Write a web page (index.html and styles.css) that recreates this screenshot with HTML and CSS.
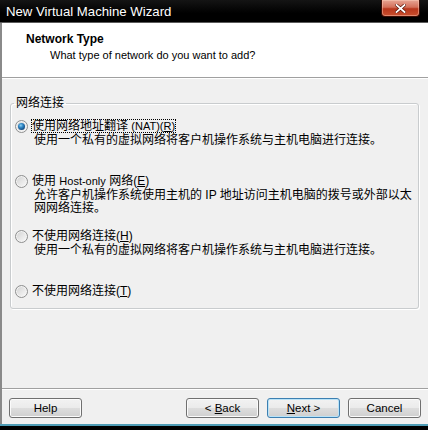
FILE: index.html
```html
<!DOCTYPE html>
<html>
<head>
<meta charset="utf-8">
<link rel="stylesheet" href="styles.css">
</head>
<body>
<div class="window">
  <div class="titlebar">
    <span class="title">New Virtual Machine Wizard</span>
    <span class="close">
      <svg width="11" height="9" viewBox="0 0 11 9"><path d="M1.5 1 L9.5 8 M9.5 1 L1.5 8" stroke="#5a1408" stroke-width="3.2" stroke-linecap="square"/><path d="M1.5 1 L9.5 8 M9.5 1 L1.5 8" stroke="#fff" stroke-width="1.8" stroke-linecap="square"/></svg>
    </span>
  </div>
  <div class="client">
    <div class="header">
      <div class="h-title">Network Type</div>
      <div class="h-sub">What type of network do you want to add?</div>
    </div>
    <div class="body">
      <fieldset class="group">
        <legend>网络连接</legend>
        <div class="options">
          <div class="option">
            <div class="choice"><span class="radio checked"></span><span class="label focus">使用网络地址翻译 <span class="latin">(NAT)(<u>R</u>)</span></span></div>
            <p class="desc">使用一个私有的虚拟网络将客户机操作系统与主机电脑进行连接。</p>
          </div>
          <div class="option">
            <div class="choice"><span class="radio"></span><span class="label">使用 <span class="latin">Host-only</span> 网络(<u>E</u>)</span></div>
            <p class="desc">允许客户机操作系统使用主机的 IP 地址访问主机电脑的拨号或外部以太<br>网网络连接。</p>
          </div>
          <div class="option">
            <div class="choice"><span class="radio"></span><span class="label">不使用网络连接(<u>H</u>)</span></div>
            <p class="desc">使用一个私有的虚拟网络将客户机操作系统与主机电脑进行连接。</p>
          </div>
          <div class="option">
            <div class="choice"><span class="radio"></span><span class="label">不使用网络连接(<u>T</u>)</span></div>
          </div>
        </div>
      </fieldset>
    </div>
    <div class="footer">
      <button class="btn">Help</button>
      <button class="btn back">&lt; <u>B</u>ack</button>
      <button class="btn default"><u>N</u>ext &gt;</button>
      <button class="btn">Cancel</button>
    </div>
  </div>
  <div class="frame-bottom"></div>
</div>
</body>
</html>
```
FILE: styles.css
```css
html, body {
  margin: 0;
  padding: 0;
  background: #000;
}

.window {
  width: 428px;
  height: 430px;
  display: flex;
  flex-direction: column;
  background: #000;
  overflow: hidden;
  font-family: "Liberation Sans", "Noto Sans CJK SC", sans-serif;
  color: #000;
}

.titlebar {
  height: 22px;
  flex: none;
  display: flex;
  align-items: flex-start;
  background: linear-gradient(#141414, #000 60%);
  border-bottom: 1px solid #5c5c5c;
}

.title {
  margin-top: 1px;
  padding-left: 6px;
  font-size: 13.2px;
  line-height: 22px;
  color: #fff;
  white-space: nowrap;
}

.close {
  margin-left: auto;
  margin-right: 8px;
  width: 39px;
  height: 17px;
  box-sizing: border-box;
  border: 1px solid #3b0c04;
  border-top: none;
  border-radius: 0 0 4px 4px;
  background: linear-gradient(#e7a594 0%, #d4705a 45%, #b8361c 55%, #c9502f 100%);
  box-shadow: inset 0 0 0 1px rgba(255, 210, 190, 0.45);
  display: flex;
  align-items: center;
  justify-content: center;
}

.client {
  flex: 1;
  display: flex;
  flex-direction: column;
  background: #f0f0f0;
  border-left: 2px solid #8a8a8a;
}

.header {
  height: 45px;
  flex: none;
  background: #fff;
  border-bottom: 1px solid #a0a0a0;
  padding: 9px 0 0 24px;
}

.h-title {
  font-size: 12px;
  font-weight: bold;
  line-height: 14px;
}

.h-sub {
  margin: 2px 0 0 24px;
  font-size: 11px;
  line-height: 14px;
}

.body {
  flex: 1;
  border-top: 1px solid #fff;
  padding: 17px 9px 0 8px;
}

.group {
  margin: 0;
  padding: 9px 4px 10px 4px;
  border: 1px solid #c9ccce;
  border-radius: 3px;
  box-shadow: 1px 1px 0 #fff, inset 1px 1px 0 #fff;
}

.group legend {
  padding: 0 2px;
  margin-left: -1px;
  font-size: 12px;
  line-height: 14px;
}

.options {
  display: grid;
  grid-template-rows: 55px 55px 55px auto;
}

.choice {
  display: flex;
  align-items: center;
  gap: 3px;
  height: 14px;
}

.radio {
  flex: none;
  width: 13px;
  height: 13px;
  box-sizing: border-box;
  border-radius: 50%;
  border: 1px solid #8e8f8f;
  background: linear-gradient(135deg, #cfd0d0 0%, #e6e6e6 50%, #fbfbfb 100%);
  box-shadow: inset 0 0 0 1px #f4f4f4;
  display: flex;
  align-items: center;
  justify-content: center;
}

.radio.checked::after {
  content: "";
  width: 7px;
  height: 7px;
  border-radius: 50%;
  background: radial-gradient(circle at 40% 35%, #8fd0f2 0%, #2f86c4 35%, #174f86 70%, #0f3558 100%);
}

.label {
  display: inline-block;
  font-size: 12px;
  line-height: 14px;
  padding: 0 1px;
  white-space: nowrap;
}

.latin {
  font-size: 11px;
}

.label.focus {
  outline: 1px dotted #000;
  outline-offset: -1px;
}

.desc {
  margin: 1px 0 0 19px;
  font-size: 12px;
  line-height: 13px;
  white-space: nowrap;
}

.footer {
  flex: none;
  height: 26px;
  border-top: 1px solid #a0a0a0;
  box-shadow: inset 0 1px 0 #fff;
  padding: 9px 7px 0 7px;
  display: flex;
  gap: 8px;
}

.btn {
  width: 73px;
  height: 20px;
  margin: 0;
  padding: 0;
  box-sizing: border-box;
  border: 1px solid #707070;
  border-radius: 3px;
  background: linear-gradient(#f2f2f2 0%, #ebebeb 48%, #dddddd 52%, #cfcfcf 100%);
  box-shadow: inset 0 0 0 1px #fbfbfb;
  font-family: "Liberation Sans", sans-serif;
  font-size: 11.5px;
  line-height: 18px;
  color: #000;
  text-align: center;
}

.btn.back {
  margin-left: auto;
}

.btn.default {
  border-color: #3c7fb1;
  box-shadow: inset 0 0 0 1px #b9e3f8;
}

.frame-bottom {
  flex: none;
  height: 6px;
  box-sizing: border-box;
  border-top: 2px solid #4f9db6;
  background: #000;
}
```
